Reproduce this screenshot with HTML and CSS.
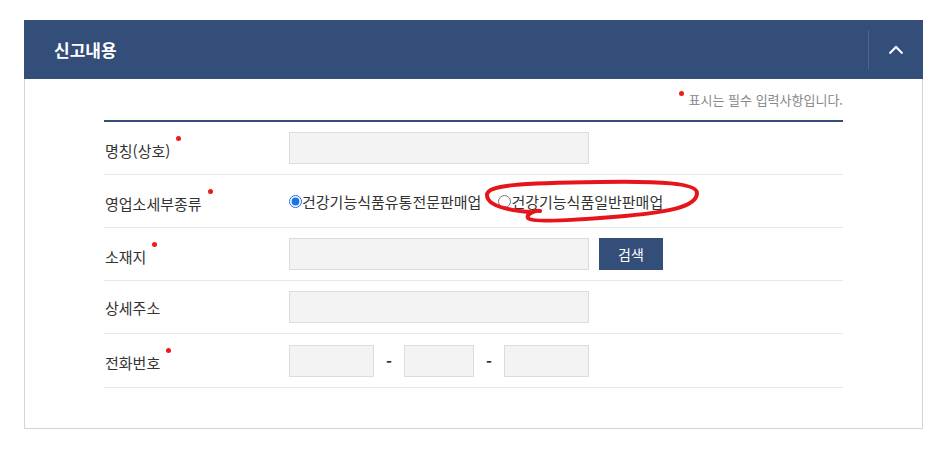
FILE: index.html
```html
<!DOCTYPE html>
<html lang="ko">
<head>
<meta charset="utf-8">
<title>신고내용</title>
<link rel="stylesheet" href="styles.css">
</head>
<body>
<section class="panel">
  <header class="panel-head">
    <h2 class="panel-title">신고내용</h2>
    <button class="toggle" type="button" aria-label="접기">
      <svg width="16" height="10" viewBox="0 0 16 10"><path d="M1.5 8.5 L8 2 L14.5 8.5" fill="none" stroke="#fff" stroke-width="2"/></svg>
    </button>
  </header>
  <div class="panel-body">
    <p class="note"><span class="req"></span> 표시는 필수 입력사항입니다.</p>
    <div class="form">
      <div class="row">
        <div class="label">명칭(상호)<span class="req"></span></div>
        <div class="field"><input class="inp wide" type="text"></div>
      </div>
      <div class="row">
        <div class="label">영업소세부종류<span class="req"></span></div>
        <div class="field radios">
          <label class="radio"><input type="radio" name="kind" checked>건강기능식품유통전문판매업</label>
          <label class="radio second"><input type="radio" name="kind">건강기능식품일반판매업</label>
        </div>
      </div>
      <div class="row">
        <div class="label">소재지<span class="req"></span></div>
        <div class="field"><input class="inp wide" type="text"><button class="btn" type="button">검색</button></div>
      </div>
      <div class="row">
        <div class="label">상세주소</div>
        <div class="field"><input class="inp wide" type="text"></div>
      </div>
      <div class="row tall">
        <div class="label">전화번호<span class="req"></span></div>
        <div class="field phone">
          <input class="inp p1" type="text"><span class="dash">-</span><input class="inp p2" type="text"><span class="dash">-</span><input class="inp p1" type="text">
        </div>
      </div>
    </div>
  </div>
  <svg class="scribble" width="225" height="52" viewBox="0 0 225 52">
    <path d="M52 36 C27 34, 9 29, 9 19 C9 9, 42 7, 122 6 C182 5, 219 7, 219 17 C219 31, 192 37, 122 42 C82 45, 52 46, 50 42 C48 38, 57 34, 62 35" fill="none" stroke="#e8141c" stroke-width="4" stroke-linecap="round"/>
  </svg>
</section>
</body>
</html>
```

FILE: styles.css
```css
* { box-sizing: border-box; }
html, body { margin: 0; padding: 0; background: #fff; }
body {
  font-family: "Malgun Gothic", "Noto Sans CJK KR", "Noto Sans", sans-serif;
  color: #333;
  padding: 20px 20px 0 24px;
}
.panel {
  position: relative;
  width: 899px;
  border: 1px solid #d5d5d5;
  border-top: 0;
}
.panel-head {
  display: flex;
  align-items: center;
  height: 59px;
  margin: 0 -1px;
  background: #344e7a;
}
.panel-title {
  flex: 1;
  margin: 0;
  padding-left: 30px;
  font-size: 17px;
  font-weight: 700;
  color: #fff;
}
.toggle {
  width: 55px;
  height: 39px;
  border: 0;
  border-left: 1px solid #4d6590;
  background: transparent;
  display: flex;
  align-items: center;
  justify-content: center;
  padding: 0;
}
.panel-body {
  padding: 11px 79px 40px 79px;
}
.note {
  margin: 0 0 10px;
  text-align: right;
  font-size: 13px;
  line-height: 20px;
  color: #888;
}
.note .req { vertical-align: 9px; margin: 0 1px 0 0; }
.req {
  display: inline-block;
  width: 5px;
  height: 5px;
  border-radius: 50%;
  background: #ef1a1a;
  vertical-align: 16px;
  margin-left: 6px;
}
.form { border-top: 2px solid #344e7a; }
.row {
  display: flex;
  align-items: center;
  min-height: 53px;
  border-bottom: 1px solid #e8e8e8;
}
.row.tall { min-height: 54px; }
.label {
  width: 185px;
  padding-left: 1px;
  font-size: 15px;
  color: #333;
}
.field {
  display: flex;
  align-items: center;
  flex: 1;
}
.inp {
  height: 32px;
  border: 1px solid #dcdcdc;
  background: #f3f3f3;
  font: inherit;
  padding: 0 8px;
}
.wide { width: 300px; }
.p1 { width: 85px; }
.p2 { width: 70px; }
.dash {
  width: 30px;
  text-align: center;
  font-size: 16px;
  font-weight: 700;
  color: #333;
}
.btn {
  margin-left: 10px;
  width: 64px;
  height: 32px;
  border: 0;
  background: #344e7a;
  color: #fff;
  font-family: inherit;
  font-size: 14px;
}
.radios { font-size: 15px; }
.radio { display: inline-flex; align-items: center; color: #333; }
.radio input {
  margin: 0;
  width: 13px;
  height: 13px;
  accent-color: #1a73e8;
}
.radio.second { margin-left: 17px; }
.scribble {
  position: absolute;
  left: 453px;
  top: 156px;
  pointer-events: none;
}
```
